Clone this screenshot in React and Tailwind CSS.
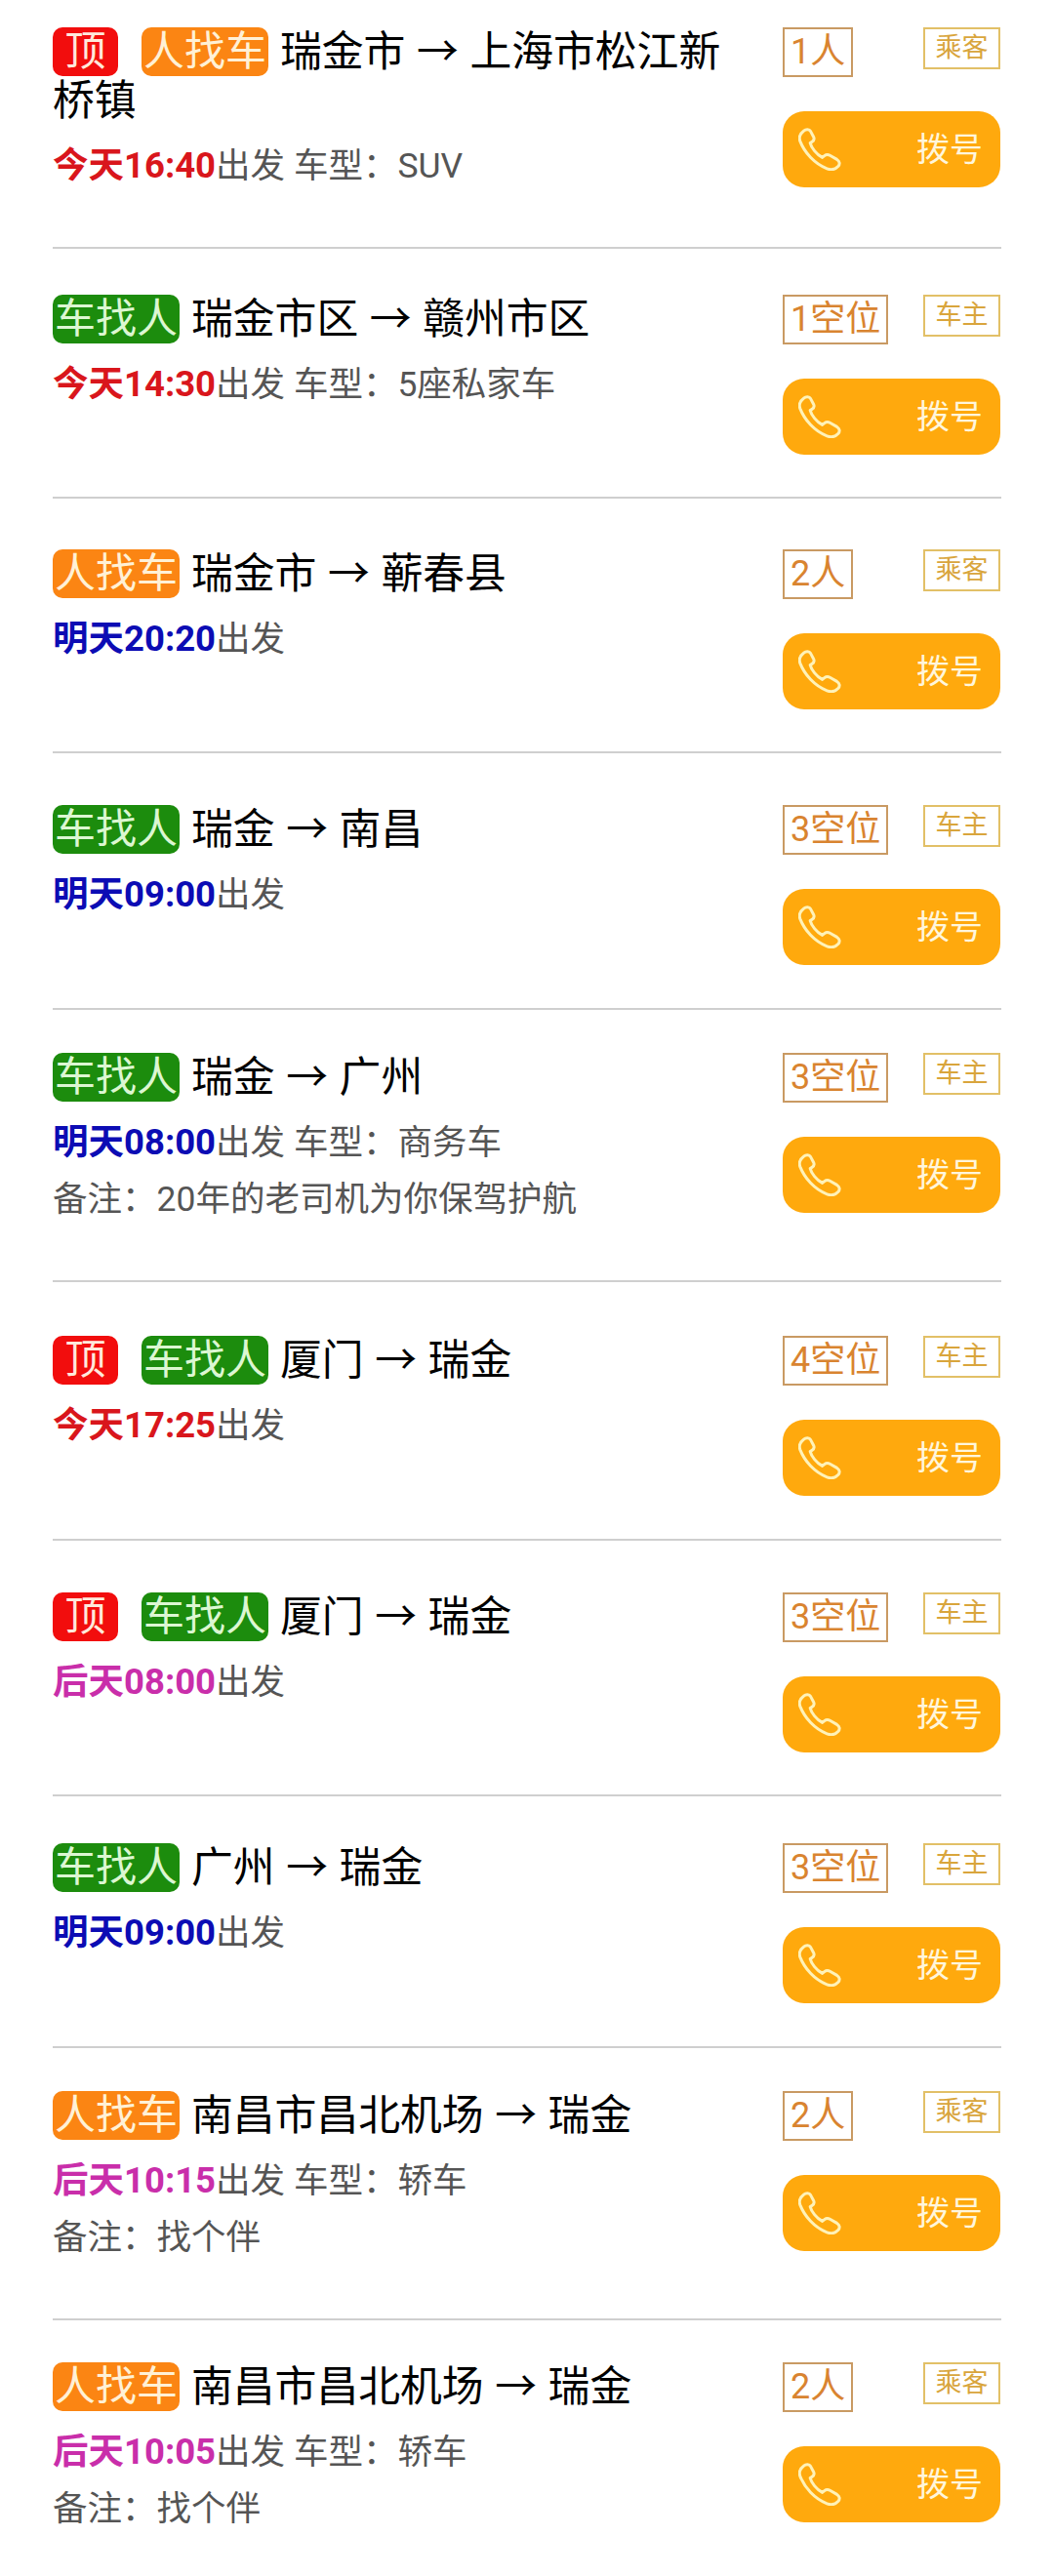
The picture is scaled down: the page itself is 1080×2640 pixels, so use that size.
// Carpool listing, ride rows with badges and a dial button
const TAG_TOP = "bg-[#f20d0d] text-[#ffe9dc] w-[67px] mr-[24px]";
const TAG_PERSON = "bg-[#fb8513] text-[#fff1d6] w-[130px] mr-[12px]";
const TAG_CAR = "bg-[#1c8c0d] text-[#dcf7d2] w-[130px] mr-[12px]";

const WHEN_RED = "text-[#d9161c]";
const WHEN_BLUE = "text-[#0c0cb4]";
const WHEN_PINK = "text-[#c92eaa]";

// full-width colon, as the source page prints it
const COLON = "\uFF1A";

const rows = [
  { pad: "pt-[28px]", rightPad: "pb-[43px]", top: true, kind: "person", route: "瑞金市 → 上海市松江新桥镇", when: "今天16:40", whenColor: WHEN_RED, car: "SUV", count: "1人", role: "乘客" },
  { pad: "pt-[47px]", rightPad: "pb-[43px]", kind: "car", route: "瑞金市区 → 赣州市区", when: "今天14:30", whenColor: WHEN_RED, car: "5座私家车", count: "1空位", role: "车主" },
  { pad: "pt-[52px]", rightPad: "pb-[43px]", kind: "person", route: "瑞金市 → 蕲春县", when: "明天20:20", whenColor: WHEN_BLUE, count: "2人", role: "乘客" },
  { pad: "pt-[53px]", rightPad: "pb-[44px]", kind: "car", route: "瑞金 → 南昌", when: "明天09:00", whenColor: WHEN_BLUE, count: "3空位", role: "车主" },
  { pad: "pt-[44px]", rightPad: "pb-[44px]", kind: "car", route: "瑞金 → 广州", when: "明天08:00", whenColor: WHEN_BLUE, car: "商务车", note: "20年的老司机为你保驾护航", count: "3空位", role: "车主" },
  { pad: "pt-[55px]", rightPad: "pb-[44px]", top: true, kind: "car", route: "厦门 → 瑞金", when: "今天17:25", whenColor: WHEN_RED, count: "4空位", role: "车主" },
  { pad: "pt-[53px]", rightPad: "pb-[43px]", top: true, kind: "car", route: "厦门 → 瑞金", when: "后天08:00", whenColor: WHEN_PINK, count: "3空位", role: "车主" },
  { pad: "pt-[48px]", rightPad: "pb-[44px]", kind: "car", route: "广州 → 瑞金", when: "明天09:00", whenColor: WHEN_BLUE, count: "3空位", role: "车主" },
  { pad: "pt-[44px]", rightPad: "pb-[44px]", kind: "person", route: "南昌市昌北机场 → 瑞金", when: "后天10:15", whenColor: WHEN_PINK, car: "轿车", note: "找个伴", count: "2人", role: "乘客" },
  { pad: "pt-[43px]", rightPad: "pb-[44px]", kind: "person", route: "南昌市昌北机场 → 瑞金", when: "后天10:05", whenColor: WHEN_PINK, car: "轿车", note: "找个伴", count: "2人", role: "乘客", last: true },
];

function Tag({ className, children }) {
  return (
    <span className={`inline-block h-[50px] rounded-[10px] text-center align-top text-[42px] leading-[50px] ${className}`}>
      {children}
    </span>
  );
}

function PhoneIcon() {
  return (
    <svg className="h-[44px] w-[44px] shrink-0" viewBox="0 0 44 44" fill="none" stroke="#fff2b8" strokeWidth="3" strokeLinecap="round" strokeLinejoin="round">
      <path d="M5.5 3.2C8 1 11.2 1.2 12.6 3.6L15.6 9.2C16.6 11.2 16 13 14.2 14.2L12.2 15.6C13.4 20.4 18.6 27.4 24.6 30.4L26.8 28.6C28.6 27.2 30.6 27.2 32.4 28.2L39.6 32.4C42.4 34.2 43 37.2 40.8 39.6C38 42.6 33.6 43.4 29.4 41.8C16.6 36.8 6.4 25.4 1.8 13.6C0.4 9.6 2 5.8 5.5 3.2Z" />
    </svg>
  );
}

function RideRow({ row }) {
  const border = row.last ? "" : "border-b-2 border-[#cfcfcf]";
  return (
    <div className={`mx-[54px] flex items-start justify-between ${row.pad} ${border}`}>
      <div className="w-[700px] pb-[54px]">
        <div className="text-[42.8px] leading-[50px] text-black [word-spacing:1px]">
          {row.top && <Tag className={TAG_TOP}>顶</Tag>}
          {row.kind === "person" ? <Tag className={TAG_PERSON}>人找车</Tag> : <Tag className={TAG_CAR}>车找人</Tag>}
          {row.route}
        </div>
        <div className="mt-[13px] text-[35.5px] leading-[58px] text-[#555555]">
          <span className={`text-[36.5px] font-bold ${row.whenColor}`}>{row.when}</span>
          出发
          {row.car && <span> 车型{COLON}{row.car}</span>}
        </div>
        {row.note && <div className="text-[35.5px] leading-[58px] text-[#555555]">备注{COLON}{row.note}</div>}
      </div>
      <div className={`-ml-[1px] w-[224px] shrink-0 pr-[1px] ${row.rightPad}`}>
        <div className="flex items-start justify-between">
          <div className="h-[51px] border-2 border-[#c99a63] px-[6px] text-[36px] leading-[47px] text-[#d98430]">{row.count}</div>
          <div className="h-[43px] w-[79px] border-2 border-[#e2c067] text-center text-[27px] leading-[38px] text-[#d9a53c]">{row.role}</div>
        </div>
        <button className="mt-[35px] flex h-[78px] w-full items-center justify-between rounded-[22px] bg-[#ffa90d] pl-[16px] pr-[18px]">
          <PhoneIcon />
          <span className="text-[34px] leading-none text-[#fff6dc]">拨号</span>
        </button>
      </div>
    </div>
  );
}

export default function App() {
  return (
    <div className="min-h-[2640px] w-[1080px] overflow-hidden bg-white font-['Roboto','Noto_Sans_CJK_SC',sans-serif]">
      {rows.map((row, i) => (
        <RideRow key={i} row={row} />
      ))}
    </div>
  );
}
